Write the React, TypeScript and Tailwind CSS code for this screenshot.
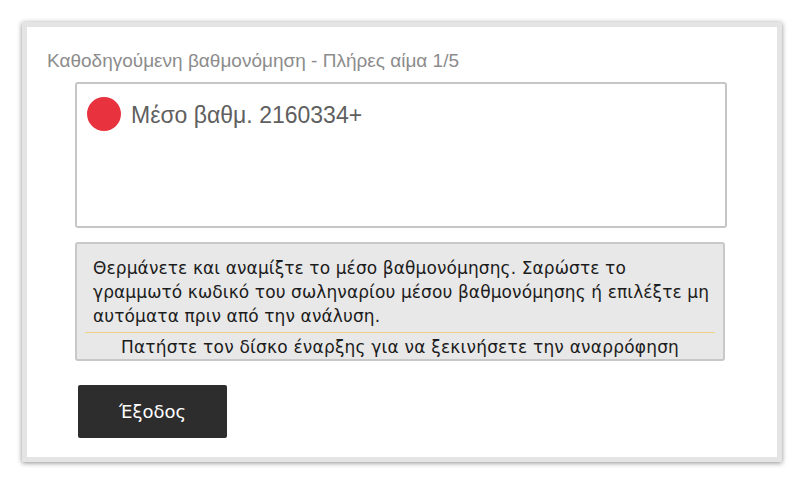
export default function App() {
  return (
    <div className="w-[800px] h-[480px] bg-white p-[22px]">
      <div className="w-[760px] h-[440px] border-[5px] border-[#e4e4e4] bg-white shadow-[0_1px_5px_rgba(0,0,0,0.45)] flex flex-col">
        {/* Title */}
        <div className="pt-[22px] pl-[20px] text-[19px] leading-[24px] text-[#8c8c8c] font-['Liberation_Sans',Arial,sans-serif]">
          Καθοδηγούμενη βαθμονόμηση - Πλήρες αίμα 1/5
        </div>

        {/* Sample box */}
        <div className="ml-[48px] mt-[9px] w-[652px] h-[146px] border-2 border-[#c6c6c6] rounded-[3px] bg-white flex items-start pl-[10px] pt-[13px]">
          <div className="w-[34px] h-[34px] rounded-full bg-[#e8333f] shrink-0" />
          <div className="ml-[10px] mt-[1px] text-[23px] leading-[34px] text-[#5f5f5f] font-['Liberation_Sans',Arial,sans-serif]">
            Μέσο βαθμ. 2160334+
          </div>
        </div>

        {/* Instructions */}
        <div className="ml-[48px] mt-[14px] w-[650px] h-[119px] border-2 border-[#c8c8c8] rounded-[3px] bg-[#e8e8e8] flex flex-col font-['DejaVu_Sans',sans-serif] text-[17px] leading-[24px] tracking-[0.1px] text-[#1c1c1c]">
          <div className="px-[16px] pt-[12px] whitespace-nowrap">
            Θερμάνετε και αναμίξτε το μέσο βαθμονόμησης. Σαρώστε το
            <br />
            γραμμωτό κωδικό του σωληναρίου μέσου βαθμονόμησης ή επιλέξτε μη
            <br />
            αυτόματα πριν από την ανάλυση.
          </div>
          <div className="mx-[8px] mt-[4px] h-[2px] bg-[#f2cf86]" />
          <div className="mt-[2px] text-center tracking-[0.2px]">
            Πατήστε τον δίσκο έναρξης για να ξεκινήσετε την αναρρόφηση
          </div>
        </div>

        {/* Exit button */}
        <div className="ml-[51px] mt-[24px]">
          <button className="w-[149px] h-[53px] bg-[#2d2d2d] rounded-[2px] text-white text-[18px] font-['DejaVu_Sans',sans-serif]">
            Έξοδος
          </button>
        </div>
      </div>
    </div>
  );
}
